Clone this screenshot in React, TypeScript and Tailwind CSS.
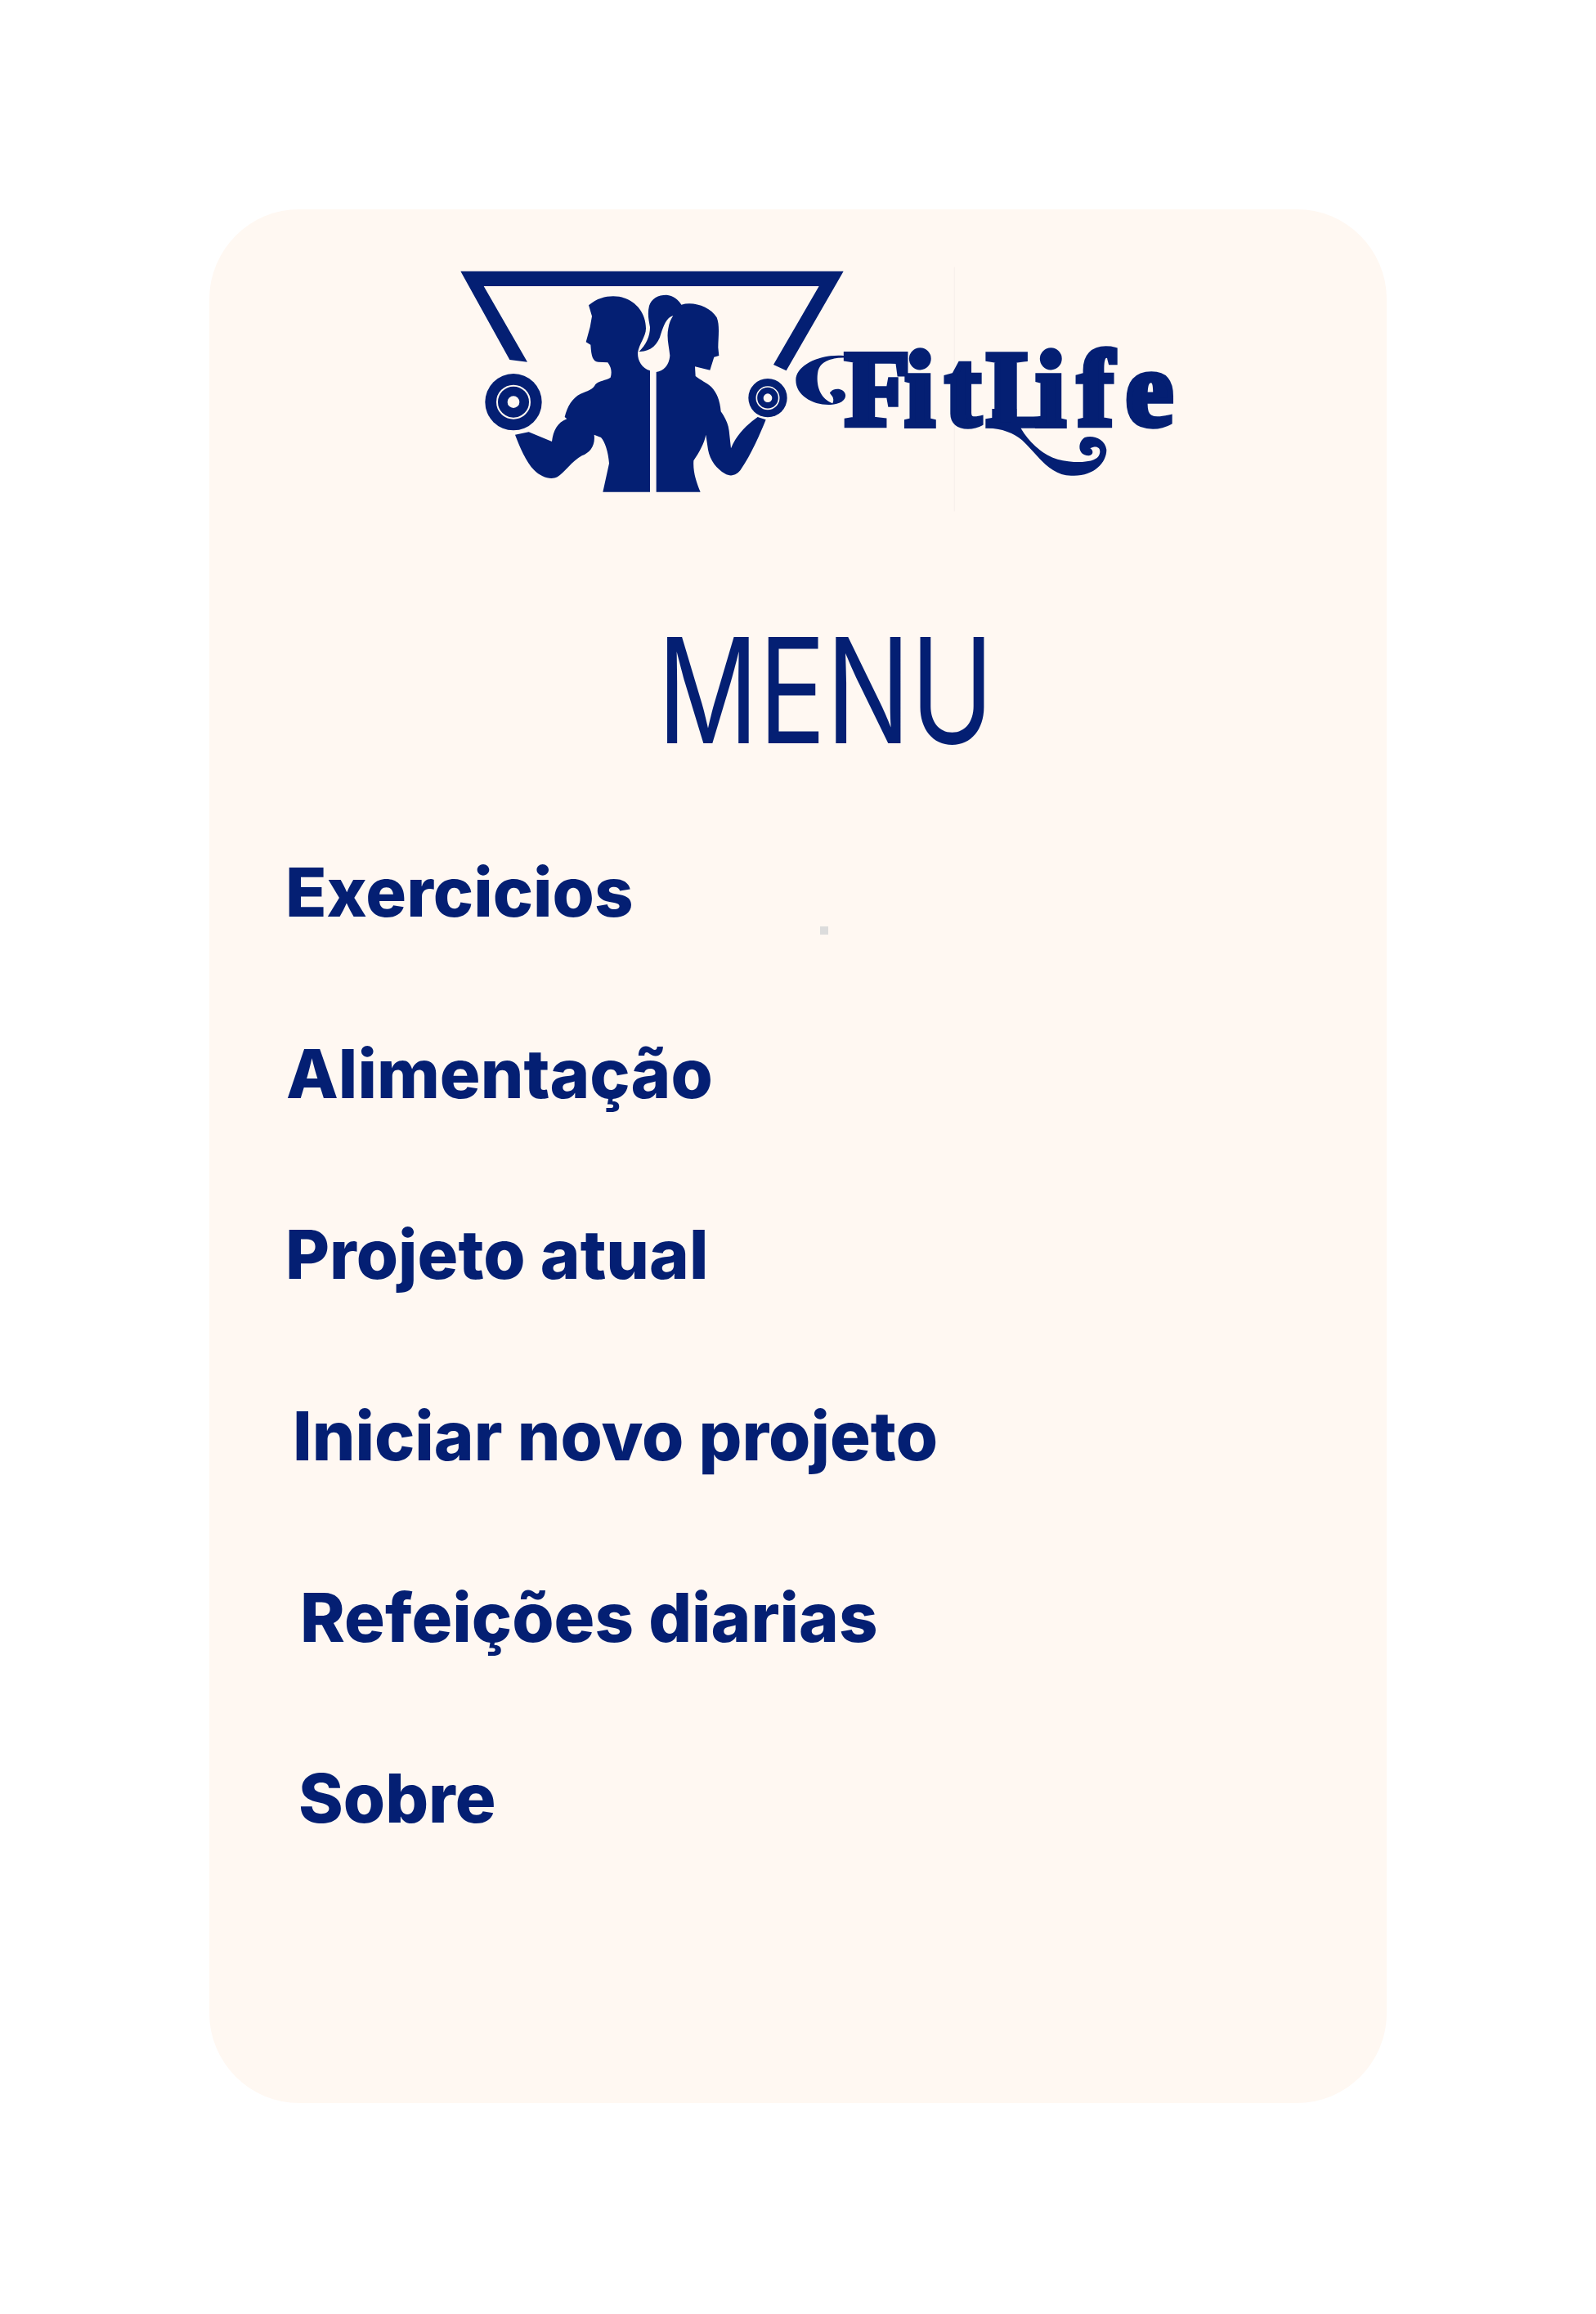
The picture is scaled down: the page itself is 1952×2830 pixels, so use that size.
const navy = '#041f73';
const cream = '#fff8f2';

const menuItems = [
  { label: 'Exercicios', indent: 'ml-[93px]' },
  { label: 'Alimentação', indent: 'ml-[94px]' },
  { label: 'Projeto atual', indent: 'ml-[93px]' },
  { label: 'Iniciar novo projeto', indent: 'ml-[102px]' },
  { label: 'Refeições diarias', indent: 'ml-[111px]' },
  { label: 'Sobre', indent: 'ml-[109px]' },
];

// Logo is drawn at 3x so the coordinates stay whole numbers
function Logo() {
  return (
    <svg className="ml-[284px] mt-[44px] block shrink-0" width="940" height="340" viewBox="0 0 2820 1020" fill={navy}>
      <rect x="1880" y="80" width="4" height="896" fill="#f8f1ec" />

      {/* triangle */}
      <path d="M70 95H1475L1265 460L1218 438L1385 150H155L315 428L250 420Z" />

      {/* man */}
      <path d="M540 220C570 195 600 187 630 187C700 187 750 240 750 305C750 335 725 360 720 395C720 425 735 450 765 460L765 905H592L615 800C612 760 600 720 585 705L560 695C565 735 545 760 515 772C480 790 450 835 425 850C400 862 365 850 340 825C310 795 285 735 270 695L320 685L405 720C410 680 425 650 460 637L452 630C462 590 480 560 510 545C535 535 555 530 565 510C575 498 605 495 620 485C625 470 625 450 610 430L575 428C555 425 550 410 547 365L530 355L545 300L552 260Z" />

      {/* woman */}
      <path d="M788 905V465C815 462 835 440 838 405C835 370 825 340 832 305C835 285 842 270 850 258C825 265 815 295 805 325C795 365 765 392 725 390C750 365 765 335 765 300C760 275 755 250 762 222C770 195 795 182 825 182C850 184 870 200 880 218C925 205 985 225 1010 265C1022 295 1015 340 1015 375L1018 405L1000 410L985 458L930 445L932 480C950 495 975 505 990 520C1010 540 1022 570 1025 610C1040 630 1052 655 1055 680L1062 745C1080 700 1110 670 1140 645L1160 630L1190 640C1170 690 1135 770 1100 820C1085 845 1060 850 1040 838C1010 820 985 790 978 750L970 695C965 725 945 760 925 790C922 830 935 870 950 905Z" />

      {/* dumbbells */}
      <circle cx="264" cy="575" r="104" />
      <circle cx="264" cy="575" r="60" fill="none" stroke={cream} strokeWidth="6" />
      <circle cx="264" cy="575" r="22" fill={cream} />
      <circle cx="1197" cy="560" r="71" />
      <circle cx="1197" cy="560" r="41" fill="none" stroke={cream} strokeWidth="5" />
      <circle cx="1197" cy="560" r="16" fill={cream} />

      {/* swash in front of the F */}
      <path d="M1475 405C1390 398 1300 440 1300 495C1300 550 1360 585 1420 585C1460 585 1485 570 1482 548C1478 525 1440 520 1425 540C1425 550 1445 555 1435 580C1385 560 1375 510 1380 470C1385 430 1420 410 1500 412Z" />

      {/* swash under the L */}
      <path d="M1995 670C2060 672 2100 690 2130 715C2180 760 2230 845 2310 845C2390 850 2440 800 2440 750C2435 710 2390 695 2360 705C2335 720 2330 770 2375 772C2390 770 2395 755 2380 745C2410 730 2425 750 2410 775C2390 800 2320 800 2260 785C2180 760 2120 680 2110 630V600H2020V660Z" />

      <text
        x="1480 1700 1848 2000 2180 2335 2510"
        y="660"
        fontFamily="'Liberation Serif', serif"
        fontWeight="700"
        fontSize="392"
        stroke={navy}
        strokeWidth="22"
      >
        FitLife
      </text>
    </svg>
  );
}

export default function App() {
  return (
    <div className="w-[1952px] h-[2830px] bg-white pt-[256px] pl-[256px]">
      <div className="relative w-[1440px] h-[2316px] rounded-[110px] bg-[#fff8f2] flex flex-col items-start overflow-hidden">
        <Logo />

        <h1 className="ml-[548px] mt-[116px] origin-left scale-x-[0.77] text-[178px] leading-[178px] font-normal text-[#041f73] font-['Inter',sans-serif]">
          MENU
        </h1>

        <ul className="mt-[96px] flex flex-col gap-[99.7px]">
          {menuItems.map((item) => (
            <li
              key={item.label}
              className={`${item.indent} h-[122px] leading-[122px] text-[83px] font-extrabold text-[#041f73] font-['Inter',sans-serif] whitespace-nowrap`}
            >
              {item.label}
            </li>
          ))}
        </ul>

        <div className="absolute left-[747px] top-[877px] w-[10px] h-[10px] bg-[#dcdcdc]" />
      </div>
    </div>
  );
}
